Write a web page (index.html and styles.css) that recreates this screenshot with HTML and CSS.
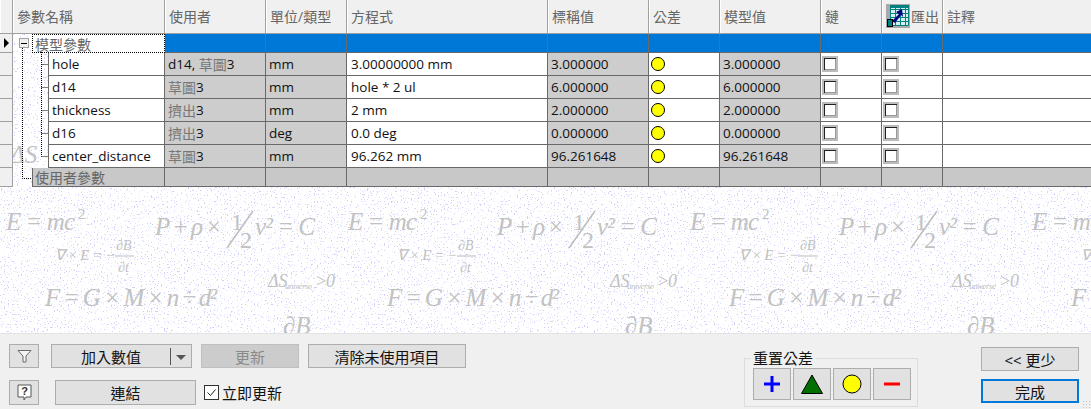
FILE: index.html
```html
<!DOCTYPE html>
<html>
<head>
    <title>參數</title>
    <link rel="stylesheet" href="styles.css">
</head>
<body>
    <div class="paper">
        <svg class="wallpaper" width="1091" height="333">
            <defs>
                <filter id="noise" x="0" y="0" width="100%" height="100%" color-interpolation-filters="sRGB">
                    <feTurbulence type="fractalNoise" baseFrequency="0.7" numOctaves="1" seed="7"/>
                    <feColorMatrix type="matrix" values="0 0 0 0 0.81  0 0 0 0 0.81  0 0 0 0 0.98  12 0 0 0 -7.4"/>
                </filter>
                <g id="formulas">
                    <text class="f-big" x="6" y="230" textLength="69">E = mc</text>
                    <text class="f-sup" x="78" y="219">2</text>
                    <text class="f-big" x="155" y="235" textLength="67">P + ρ ×</text>
                    <text class="f-half" x="231" y="230">1</text>
                    <path d="M227 248L253 211" stroke="#bdbdbd" stroke-width="1.5"/>
                    <text class="f-half" x="240" y="248">2</text>
                    <text class="f-big" x="255" y="235" textLength="60">v² = C</text>
                    <text class="f-small" x="55" y="260" textLength="60">∇ × E = −</text>
                    <text class="f-frac" x="116" y="250">∂B</text>
                    <path d="M115 256H134" stroke="#bdbdbd"/>
                    <text class="f-frac" x="118" y="272">∂t</text>
                    <text class="f-tiny" x="268" y="287">ΔS</text>
                    <text class="f-sub" x="285" y="289" textLength="27">universe</text>
                    <text class="f-tiny" x="315" y="287" textLength="20">&gt; 0</text>
                    <text class="f-big" x="45" y="306" textLength="172">F = G × M × n ÷ d²</text>
                    <text class="f-big" x="283" y="334">∂B</text>
                </g>
            </defs>
            <rect width="1091" height="333" fill="#fff"/>
            <rect width="1091" height="333" filter="url(#noise)"/>
            <use href="#formulas"/>
            <use href="#formulas" x="342"/>
            <use href="#formulas" x="684"/>
            <use href="#formulas" x="1026"/>
            <text class="f-big" x="10" y="163">ΔS</text>
        </svg>

        <div class="grid">
            <!-- header -->
            <div class="hd corner"></div>
            <div class="hd span-name">參數名稱</div>
            <div class="hd">使用者</div>
            <div class="hd">單位/類型</div>
            <div class="hd">方程式</div>
            <div class="hd">標稱值</div>
            <div class="hd">公差</div>
            <div class="hd">模型值</div>
            <div class="hd">鏈</div>
            <div class="hd export">
                <svg width="24" height="24" viewBox="0 0 24 24">
                    <rect width="24" height="24" fill="#a9a9a9"/>
                    <rect x="4" y="1" width="19" height="21" fill="#d8eeee"/>
                    <path d="M4.5 1.5h18v20h-18z M4 5.5h19 M4 9.5h19 M4 13.5h19 M4 17.5h19 M9.5 1v21 M14.5 1v21 M19.5 1v21" fill="none" stroke="#008080"/>
                    <rect x="4" y="1" width="19" height="3" fill="#008080"/>
                    <path d="M6 17 L13 10 L10 8 L16 5 L17 13 L15 11 L9 19z" fill="#000080"/>
                    <rect x="1.5" y="15.5" width="5" height="7" fill="#008080" stroke="#000"/>
                </svg>
                <span>匯出</span>
            </div>
            <div class="hd">註釋</div>

            <!-- model parameters group -->
            <div class="rowhd current"><i class="arrow"></i></div>
            <div class="tree"></div>
            <div class="group selected">模型參數</div>
            <div class="bar"></div><div class="bar"></div><div class="bar"></div><div class="bar"></div><div class="bar"></div><div class="bar"></div><div class="bar"></div><div class="bar"></div><div class="bar last"></div>

            <!-- rows -->
            <div class="rowhd"></div><div class="tree wide-tree"></div>
            <div class="c name">hole</div><div class="c gray">d14, <span class="cjk">草圖</span>3</div><div class="c gray">mm</div><div class="c">3.00000000 mm</div><div class="c gray">3.000000</div><div class="c"><i class="dot"></i></div><div class="c gray">3.000000</div><div class="c"><i class="box"></i></div><div class="c"><i class="box"></i></div><div class="c last"></div>

            <div class="rowhd"></div><div class="tree wide-tree"></div>
            <div class="c name">d14</div><div class="c gray"><span class="cjk">草圖</span>3</div><div class="c gray">mm</div><div class="c">hole * 2 ul</div><div class="c gray">6.000000</div><div class="c"><i class="dot"></i></div><div class="c gray">6.000000</div><div class="c"><i class="box"></i></div><div class="c"><i class="box"></i></div><div class="c last"></div>

            <div class="rowhd"></div><div class="tree wide-tree"></div>
            <div class="c name">thickness</div><div class="c gray"><span class="cjk">擠出</span>3</div><div class="c gray">mm</div><div class="c">2 mm</div><div class="c gray">2.000000</div><div class="c"><i class="dot"></i></div><div class="c gray">2.000000</div><div class="c"><i class="box"></i></div><div class="c"><i class="box"></i></div><div class="c last"></div>

            <div class="rowhd"></div><div class="tree wide-tree"></div>
            <div class="c name">d16</div><div class="c gray"><span class="cjk">擠出</span>3</div><div class="c gray">deg</div><div class="c">0.0 deg</div><div class="c gray">0.000000</div><div class="c"><i class="dot"></i></div><div class="c gray">0.000000</div><div class="c"><i class="box"></i></div><div class="c"><i class="box"></i></div><div class="c last"></div>

            <div class="rowhd"></div><div class="tree wide-tree"></div>
            <div class="c name">center_distance</div><div class="c gray"><span class="cjk">草圖</span>3</div><div class="c gray">mm</div><div class="c">96.262 mm</div><div class="c gray">96.261648</div><div class="c"><i class="dot"></i></div><div class="c gray">96.261648</div><div class="c"><i class="box"></i></div><div class="c"><i class="box"></i></div><div class="c last"></div>

            <!-- user parameters group -->
            <div class="rowhd"></div>
            <div class="tree"></div>
            <div class="group">使用者參數</div>
            <div class="fill"></div><div class="fill"></div><div class="fill"></div><div class="fill"></div><div class="fill"></div><div class="fill"></div><div class="fill"></div><div class="fill"></div><div class="fill last"></div>

            <!-- dotted tree lines, laid over the indent cells -->
            <svg class="lines" width="36" height="153">
                <path d="M9.5 14V144.5H19 M28.5 18V122.5 M28.5 30.5H35 M28.5 53.5H35 M28.5 76.5H35 M28.5 99.5H35 M28.5 122.5H35" fill="none" stroke="#000" stroke-dasharray="1 1"/>
                <rect x="6.5" y="4.5" width="9" height="9" fill="#f0f0f0" stroke="#a0a0a0"/>
                <path d="M8 9.5H14" stroke="#000"/>
            </svg>
        </div>
    </div>

    <div class="footer">
        <div class="actions">
            <div class="line first">
                <button class="btn tool">
                    <svg width="15" height="14" viewBox="0 0 15 14"><path d="M1 1.5H14L9 7V13H6V7Z" fill="#f4f4f4" stroke="#6b6b6b"/></svg>
                </button>
                <button class="btn split"><span class="split-label">加入數值</span><i class="sep"></i><i class="caret"></i></button>
                <button class="btn update" disabled>更新</button>
                <button class="btn clear">清除未使用項目</button>
            </div>
            <div class="line">
                <button class="btn tool">
                    <svg width="15" height="17" viewBox="0 0 15 17"><path d="M1 1H14V13H9L7 16V13H1Z" fill="#fff" stroke="#555"/><text x="7.5" y="11" class="qmark">?</text></svg>
                </button>
                <button class="btn link">連結</button>
                <label class="check"><i class="tick"><svg width="13" height="13" viewBox="0 0 13 13"><path d="M2.5 6.5L5.5 9.5L10.5 3.5" fill="none" stroke="#222"/></svg></i>立即更新</label>
            </div>
        </div>

        <fieldset class="reset">
            <legend>重置公差</legend>
            <div class="reset-row">
                <button class="btn sym"><svg width="16" height="16" viewBox="0 0 16 16"><path d="M0 8H16M8 0V16" stroke="#00f" stroke-width="3"/></svg></button>
                <button class="btn sym"><svg width="22" height="20" viewBox="0 0 22 20"><path d="M11 1L21.5 19.5H.5Z" fill="#007000" stroke="#000"/></svg></button>
                <button class="btn sym"><svg width="20" height="20" viewBox="0 0 20 20"><circle cx="10" cy="10" r="9" fill="#ff0" stroke="#000"/></svg></button>
                <button class="btn sym"><svg width="16" height="4" viewBox="0 0 16 4"><rect width="16" height="3" y="0.5" fill="#f00"/></svg></button>
            </div>
        </fieldset>

        <div class="closing">
            <button class="btn wide">&lt;&lt; 更少</button>
            <button class="btn wide done">完成</button>
        </div>
    </div>
    <i class="grip"></i>
</body>
</html>
```

FILE: styles.css
```css
* {
    box-sizing: border-box;
}

html, body {
    margin: 0;
    height: 409px;
    overflow: hidden;
    background-color: #f0f0f0;
}

body {
    font-family: "Open Sans", "Noto Sans CJK TC", sans-serif;
    font-size: 13.5px;
    color: #111;
    position: relative;
}

.paper {
    position: relative;
    height: 333px;
    overflow: hidden;
}

.wallpaper {
    position: absolute;
    left: 0;
    top: 0;
}

.wallpaper text {
    font-family: "Liberation Serif", serif;
    fill: #c2c2c2;
}

.f-big {
    font-size: 25px;
    font-style: italic;
}

.f-half {
    font-size: 24px;
}

.f-sup {
    font-size: 15px;
}

.f-small {
    font-size: 15px;
    font-style: italic;
}

.f-frac {
    font-size: 14px;
    font-style: italic;
}

.f-tiny {
    font-size: 18px;
    font-style: italic;
}

.f-sub {
    font-size: 9px;
    font-style: italic;
}

/* table */
.grid {
    position: relative;
    display: grid;
    grid-template-columns: 13px 19px 17px 116px 101px 81px 201px 101px 71px 101px 61px 61px 149px;
    grid-template-rows: 34px 19px repeat(5, 23px) 19px;
}

.hd {
    display: flex;
    align-items: center;
    padding: 0 0 2px 4px;
    font-size: 14px;
    color: #666;
    background-color: #f0f0f0;
    border-right: 1px solid #a0a0a0;
    border-bottom: 1px solid #a0a0a0;
    box-shadow: inset 1px 0 0 #fff;
}

.corner {
    padding: 0;
}

.span-name {
    grid-column: span 3;
}

.export {
    gap: 1px;
}

.rowhd {
    display: flex;
    align-items: center;
    padding-left: 4px;
    background-color: #f0f0f0;
    border-right: 1px solid #a0a0a0;
    border-bottom: 1px solid #a0a0a0;
}

.arrow {
    width: 0;
    height: 0;
    border-left: 5px solid #000;
    border-top: 5px solid transparent;
    border-bottom: 5px solid transparent;
}

.wide-tree {
    grid-column: span 2;
    border-right: 1px solid #696969;
}

.group {
    grid-column: span 2;
    display: flex;
    align-items: center;
    padding-left: 2px;
    font-size: 14px;
    color: #666;
    background-color: #c8c8c8;
    border-left: 1px solid #696969;
    border-right: 1px solid #696969;
    border-bottom: 1px solid #696969;
}

.group.selected {
    background-color: #fff;
    border: 1px dotted #000;
}

.bar {
    background-color: #0078d7;
    border-right: 1px solid #696969;
    border-bottom: 1px solid #696969;
}

.fill {
    background-color: #c8c8c8;
    border-right: 1px solid #696969;
    border-bottom: 1px solid #696969;
}

.c {
    display: flex;
    align-items: center;
    padding-left: 4px;
    background-color: #fff;
    border-right: 1px solid #696969;
    border-bottom: 1px solid #696969;
    white-space: pre;
}

.c.name {
    padding-left: 3px;
}

.c.gray {
    background-color: #cdcdcd;
    padding-left: 3px;
}

.cjk {
    color: #777;
    font-size: 14px;
}

.last {
    border-right: 0;
}

.dot {
    width: 14px;
    height: 14px;
    margin-left: -2px;
    border: 1px solid #000;
    border-radius: 50%;
    background-color: #ff0;
}

.box {
    width: 16px;
    height: 16px;
    margin-left: -3px;
    border: 2px solid #bcbcbc;
    background-color: #fff;
    box-shadow: inset 1px 1px 0 #222, inset -1px -1px 0 #999;
}

.lines {
    position: absolute;
    left: 13px;
    top: 34px;
}

/* bottom panel */
.footer {
    display: flex;
    align-items: flex-start;
    height: 76px;
    padding: 10px 0 0 9px;
    border-top: 1px solid #e3e3e3;
    font-size: 15px;
}

.btn {
    display: inline-flex;
    align-items: center;
    justify-content: center;
    padding: 0;
    font-family: inherit;
    font-size: 15px;
    color: #111;
    background-color: #e1e1e1;
    border: 1px solid #adadad;
}

.actions {
    display: flex;
    flex-direction: column;
    gap: 12px;
    width: 457px;
}

.line {
    display: flex;
    align-items: center;
    height: 25px;
}

.line.first {
    height: 24px;
}

.line .btn {
    height: 100%;
}

.tool {
    width: 30px;
    margin-right: 12px;
}

.split {
    width: 141px;
    margin-right: 9px;
}

.split-label {
    width: 119px;
    text-align: center;
}

.sep {
    width: 1px;
    height: 17px;
    background-color: #555;
}

.caret {
    width: 0;
    height: 0;
    margin: 2px 5px 0;
    border-top: 5px solid #555;
    border-left: 5px solid transparent;
    border-right: 5px solid transparent;
}

.btn.update {
    width: 98px;
    margin-right: 9px;
    color: #8a8a8a;
    background-color: #cccccc;
    border-color: #bfbfbf;
}

.clear {
    width: 158px;
}

.link {
    width: 141px;
    margin-left: 4px;
    margin-right: 8px;
}

.check {
    display: flex;
    align-items: center;
    gap: 3px;
}

.tick {
    display: flex;
    width: 15px;
    height: 15px;
    background-color: #fff;
    border: 1px solid #333;
}

.qmark {
    font-family: "Liberation Sans", sans-serif;
    font-size: 11px;
    font-weight: bold;
    text-anchor: middle;
    fill: #333;
}

.reset {
    width: 174px;
    height: 56px;
    margin: 7px 0 0 278px;
    padding: 2px 0 0 8px;
    border: 1px solid #dcdcdc;
}

.reset legend {
    margin-left: -3px;
    padding: 0 3px;
    line-height: 15px;
}

.reset-row {
    display: flex;
    gap: 2px;
}

.sym {
    width: 38px;
    height: 32px;
}

.closing {
    display: flex;
    flex-direction: column;
    gap: 8px;
    margin: 3px 0 0 63px;
}

.wide {
    width: 98px;
    height: 24px;
}

.btn.done {
    border: 2px solid #0078d7;
}

.grip {
    position: absolute;
    right: 1px;
    bottom: 1px;
    width: 8px;
    height: 8px;
    background-image: radial-gradient(#c0c0c0 1px, transparent 1px);
    background-size: 3px 3px;
}
```
